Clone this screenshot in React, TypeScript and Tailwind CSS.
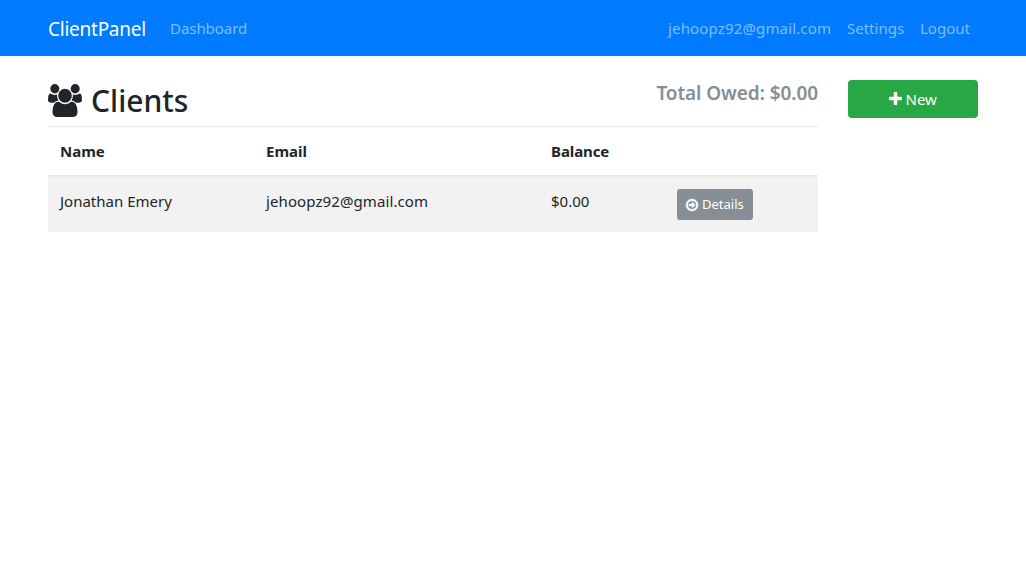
type IconProps = { className?: string };

function UsersIcon({ className }: IconProps) {
  return (
    <svg viewBox="0 0 1920 1792" preserveAspectRatio="none" fill="currentColor" aria-hidden="true" className={className}>
      <path d="M593 896q-162 5-265 128h-134q-82 0-138-40.5t-56-118.5q0-353 124-353 6 0 43.5 21t97.5 42.5 119 21.5q67 0 133-23-5 37-5 66 0 139 81 256zm1071 637q0 120-73 189.5t-194 69.5h-874q-121 0-194-69.5t-73-189.5q0-53 3.5-103.5t14-109 26.5-108.5 43-97.5 62-81 85.5-53.5 111.5-20q10 0 43 21.5t73 48 107 48 135 21.5 135-21.5 107-48 73-48 43-21.5q61 0 111.5 20t85.5 53.5 62 81 43 97.5 26.5 108.5 14 109 3.5 103.5zm-1024-1277q0 106-75 181t-181 75-181-75-75-181 75-181 181-75 181 75 75 181zm704 384q0 159-112.5 271.5t-271.5 112.5-271.5-112.5-112.5-271.5 112.5-271.5 271.5-112.5 271.5 112.5 112.5 271.5zm576 225q0 78-56 118.5t-138 40.5h-134q-103-123-265-128 81-117 81-256 0-29-5-66 66 23 133 23 59 0 119-21.5t97.5-42.5 43.5-21q124 0 124 353zm-128-609q0 106-75 181t-181 75-181-75-75-181 75-181 181-75 181 75 75 181z" />
    </svg>
  );
}

function PlusIcon({ className }: IconProps) {
  return (
    <svg viewBox="192 128 1408 1408" fill="currentColor" aria-hidden="true" className={className}>
      <path d="M1600 736v192q0 40-28 68t-68 28h-416v416q0 40-28 68t-68 28h-192q-40 0-68-28t-28-68v-416h-416q-40 0-68-28t-28-68v-192q0-40 28-68t68-28h416v-416q0-40 28-68t68-28h192q40 0 68 28t28 68v416h416q40 0 68 28t28 68z" />
    </svg>
  );
}

function ArrowCircleIcon({ className }: IconProps) {
  return (
    <svg viewBox="128 128 1536 1536" fill="currentColor" stroke="currentColor" strokeWidth="50" overflow="visible" aria-hidden="true" className={className}>
      <path d="M1285 896q0 14-9 23l-320 320q-9 9-23 9-13 0-22.5-9.5t-9.5-22.5v-192h-352q-13 0-22.5-9.5t-9.5-22.5v-192q0-13 9.5-22.5t22.5-9.5h352v-192q0-14 9-23t23-9q12 0 24 10l319 319q9 9 9 23zm155 0q0-148-73-273t-198-198-273-73-273 73-198 198-73 273 73 273 198 198 273 73 273-73 198-198 73-273zm224 0q0 209-103 385.5t-279.5 279.5-385.5 103-385.5-103-279.5-279.5-103-385.5 103-385.5 279.5-279.5 385.5-103 385.5 103 279.5 279.5 103 385.5z" />
    </svg>
  );
}

function Navbar() {
  return (
    <nav className="flex h-14 items-center bg-[#007bff] px-12 whitespace-nowrap">
      <a href="#" className="w-[98px] pt-0.5 text-[19px] tracking-[-0.25px] text-white">
        ClientPanel
      </a>
      <a href="#" className="ml-6 tracking-[-0.05px] text-white/50">
        Dashboard
      </a>
      <div className="ml-auto flex gap-4 pr-2 text-white/50">
        <a href="#" className="w-[163px] tracking-[0.15px]">jehoopz92@gmail.com</a>
        <a href="#" className="w-[57px]">Settings</a>
        <a href="#" className="w-[50px]">Logout</a>
      </div>
    </nav>
  );
}

function ClientsTable() {
  return (
    <table className="w-full table-fixed border-collapse text-left whitespace-nowrap">
      <colgroup>
        <col className="w-[206px]" />
        <col className="w-[285px]" />
        <col className="w-[126px]" />
        <col />
      </colgroup>
      <thead>
        <tr className="h-[49px] border-t border-b-2 border-[#e9ecef] font-bold">
          <th className="px-3">Name</th>
          <th className="px-3">Email</th>
          <th className="px-3 tracking-[-0.1px]">Balance</th>
          <th />
        </tr>
      </thead>
      <tbody>
        <tr className="h-14 bg-[#f2f2f2] align-top">
          <td className="px-3 pt-3 leading-6">Jonathan Emery</td>
          <td className="px-3 pt-3 leading-6 tracking-[0.1px]">jehoopz92@gmail.com</td>
          <td className="px-3 pt-3 leading-6">$0.00</td>
          <td className="px-3 pt-3">
            <button className="flex h-[31px] w-[76px] items-center gap-1 rounded-[3px] bg-[#868e96] pt-px pl-[9px] text-[13px] text-white">
              <ArrowCircleIcon className="size-3" />
              Details
            </button>
          </td>
        </tr>
      </tbody>
    </table>
  );
}

export default function App() {
  return (
    <div className="min-h-screen bg-white font-['Noto_Sans',sans-serif] text-[15px] text-[#212529]">
      <Navbar />
      <main className="flex items-start gap-[30px] px-12 pt-6">
        <section className="w-[770px]">
          <header className="flex h-[46px] items-start justify-between">
            <h2 className="flex h-10 items-center gap-[9px] text-[30px] font-medium">
              <UsersIcon className="mt-px h-[33px] w-[34px]" />
              Clients
            </h2>
            <h5 className="text-[19px] leading-[26px] font-semibold tracking-[-0.08px] text-[#868e96]">
              Total Owed: $0.00
            </h5>
          </header>
          <ClientsTable />
        </section>
        <button className="flex h-[38px] w-[130px] items-center justify-center gap-1 rounded bg-[#28a745] text-white">
          <PlusIcon className="-mt-px size-[13px]" />
          <span className="w-8 text-left">New</span>
        </button>
      </main>
    </div>
  );
}
